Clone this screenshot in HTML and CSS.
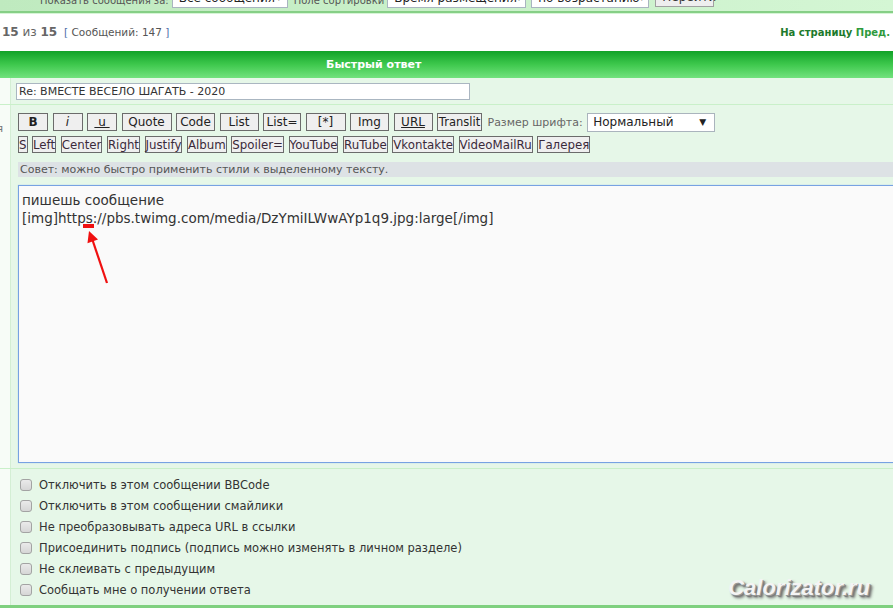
FILE: index.html
```html
<!DOCTYPE html>
<html lang="ru">
<head>
    <meta charset="UTF-8">
    <title>Быстрый ответ</title>
    <link rel="stylesheet" href="styles.css">
</head>
<body>
    <!-- Filter bar (scrolled partly out of view) -->
    <div class="filter-bar">
        <span class="filter-label">Показать сообщения за:</span>
        <span class="fake-select sel-period">Все сообщения<i>&#9662;</i></span>
        <span class="filter-label">Поле сортировки</span>
        <span class="fake-select sel-field">Время размещения<i>&#9662;</i></span>
        <span class="fake-select sel-order">по возрастанию<i>&#9662;</i></span>
        <span class="go-btn">Перейти</span>
    </div>

    <div class="pagination">
        <div class="page-count"><b>15</b> из <b>15</b> <span class="post-count"><em>[</em> Сообщений: 147 <em>]</em></span></div>
        <div class="page-links">На страницу <span class="prev">Пред.</span></div>
    </div>

    <div class="panel">
        <div class="panel-head">Быстрый ответ</div>

        <div class="row">
            <div class="side"></div>
            <div class="cell subject-cell">
                <div class="subject">Re: ВМЕСТЕ ВЕСЕЛО ШАГАТЬ - 2020</div>
            </div>
        </div>

        <div class="row">
            <div class="side"><span>Сообщения</span></div>
            <div class="cell message-cell">
                <div class="toolbar">
                    <span class="btn w30"><b>B</b></span>
                    <span class="btn w30"><i>i</i></span>
                    <span class="btn w30"><u>&nbsp;u&nbsp;</u></span>
                    <span class="btn w50">Quote</span>
                    <span class="btn w39">Code</span>
                    <span class="btn w39">List</span>
                    <span class="btn w38">List=</span>
                    <span class="btn w40">[*]</span>
                    <span class="btn w39">Img</span>
                    <span class="btn w39"><u>URL</u></span>
                    <span class="btn w44">Translit</span>
                    <span class="size-label">Размер шрифта:</span>
                    <span class="size-select">Нормальный<i>&#9660;</i></span>
                </div>
                <div class="toolbar toolbar-tags">
                    <span class="btn">S</span>
                    <span class="btn">Left</span>
                    <span class="btn">Center</span>
                    <span class="btn">Right</span>
                    <span class="btn">Justify</span>
                    <span class="btn">Album</span>
                    <span class="btn">Spoiler=</span>
                    <span class="btn">YouTube</span>
                    <span class="btn">RuTube</span>
                    <span class="btn">Vkontakte</span>
                    <span class="btn">VideoMailRu</span>
                    <span class="btn">Галерея</span>
                </div>
                <div class="tip">Совет: можно быстро применить стили к выделенному тексту.</div>
                <div class="editor">
                    <div>пишешь сообщение</div>
                    <div>[img]https://pbs.twimg.com/media/DzYmiILWwAYp1q9.jpg:large[/img]</div>

                    <!-- red annotation over the text -->
                    <svg class="annotation" width="40" height="70" viewBox="0 0 40 70">
                        <rect x="2" y="1" width="11" height="4" fill="#f01010"/>
                        <line x1="26" y1="60" x2="11.5" y2="17" stroke="#f01010" stroke-width="2.2"/>
                        <polygon points="8,8 17,16.6 6.5,20.2" fill="#f01010"/>
                    </svg>
                </div>
            </div>
        </div>

        <div class="row row-last">
            <div class="side"></div>
            <div class="cell options">
                <label><input type="checkbox"> Отключить в этом сообщении BBCode</label>
                <label><input type="checkbox"> Отключить в этом сообщении смайлики</label>
                <label><input type="checkbox"> Не преобразовывать адреса URL в ссылки</label>
                <label><input type="checkbox"> Присоединить подпись (подпись можно изменять в личном разделе)</label>
                <label><input type="checkbox"> Не склеивать с предыдущим</label>
                <label><input type="checkbox"> Сообщать мне о получении ответа</label>
                <div class="watermark">Calorizator.ru</div>
            </div>
        </div>
    </div>
</body>
</html>
```

FILE: styles.css
```css
body {
    margin: 0;
    font-family: "DejaVu Sans", Verdana, sans-serif;
    font-size: 11px;
    color: #333;
    background: #fff;
    overflow: hidden;
}

/* filter bar */
.filter-bar {
    margin-top: -12px;
    height: 23px;
    padding: 0 0 0 40px;
    display: flex;
    align-items: flex-end;
    white-space: nowrap;
    background: linear-gradient(to right, #bfeabf, #d4f6d4);
    border-bottom: 2px solid #86cf86;
    box-shadow: 0 1px 0 #d6f5d6;
}
.filter-bar > span {
    flex-shrink: 0;
}
.filter-label {
    color: #555;
    margin-bottom: 5px;
    font-size: 10px;
}
.fake-select {
    display: flex;
    justify-content: space-between;
    box-sizing: border-box;
    height: 20px;
    margin-bottom: 3px;
    padding: 2px 6px 0 6px;
    background: #fff;
    border: 1px solid #a9b5c0;
    font-size: 12px;
    color: #222;
    overflow: hidden;
}
.fake-select i {
    font-style: normal;
    font-size: 8px;
    color: #666;
    padding-top: 3px;
}
.sel-period { width: 116px; margin: 0 6px 3px 3px; }
.sel-field { width: 139px; margin: 0 5px 3px 3px; }
.sel-order { width: 118px; margin-right: 6px; }
.go-btn {
    box-sizing: border-box;
    width: 59px;
    height: 20px;
    margin-bottom: 4px;
    padding: 2px 6px 0;
    border: 1px solid #a0a0a0;
    background: #eee;
    font-size: 12px;
}

/* pagination */
.pagination {
    height: 38px;
    display: flex;
    justify-content: space-between;
    align-items: center;
    padding: 0 3px 0 2px;
}
.page-count {
    font-size: 12px;
    color: #666;
}
.page-count b {
    color: #666;
}
.post-count {
    margin-left: 3px;
    font-size: 10.5px;
    color: #555;
}
.post-count em {
    font-style: normal;
    color: #4f6fa8;
}
.page-links {
    font-weight: bold;
    font-size: 10px;
    color: #1c7a2c;
}
.page-links .prev {
    color: #2e9a3c;
}

/* quick reply panel */
.panel-head {
    height: 27px;
    line-height: 27px;
    padding-left: 326px;
    color: #fff;
    font-weight: bold;
    font-size: 11px;
    background: linear-gradient(#10a228, #3ec84d 50%, #72e27e);
}
.row {
    display: flex;
    border-bottom: 1px solid #c9f0c9;
}
.row-last {
    border-bottom: 3px solid #7fd07f;
}
.side {
    width: 10px;
    flex-shrink: 0;
    background: #f7fcf7;
    border-right: 1px solid #d4eed4;
    display: flex;
    justify-content: flex-end;
    overflow: hidden;
    white-space: nowrap;
    color: #777;
    font-size: 11px;
}
.side span {
    padding-top: 17px;
    margin-right: 7px;
}
.cell {
    flex: 1;
    background: #e6f7e8;
    min-width: 0;
}
.subject-cell {
    height: 26px;
    padding: 5px 0 0 5px;
    box-sizing: border-box;
}
.subject {
    box-sizing: border-box;
    width: 454px;
    height: 17px;
    padding: 1px 2px;
    background: #fff;
    border: 1px solid #aab6c1;
    color: #333;
}

/* message area */
.message-cell {
    padding: 8px 0 5px 7px;
}
.toolbar {
    display: flex;
    align-items: center;
    gap: 4.5px;
    height: 18px;
}
.toolbar-tags {
    margin-top: 5px;
    height: 17px;
    gap: 4.5px;
}
.btn {
    box-sizing: border-box;
    height: 18px;
    padding: 0 1px;
    display: flex;
    align-items: center;
    justify-content: center;
    border: 1px solid #6b6b6b;
    background: #efefef;
    color: #222;
    font-size: 12px;
}
.toolbar-tags .btn {
    height: 17px;
    padding: 0;
    font-size: 11.8px;
    color: #3a2a3a;
}
.btn b {
    font-size: 12px;
}
.w30 { width: 30px; }
.w38 { width: 38px; }
.w39 { width: 39px; }
.w40 { width: 40px; }
.w44 { width: 45px; font-size: 11.5px; }
.w50 { width: 50px; }
.size-label {
    margin-left: 1px;
    color: #666;
    font-size: 11px;
}
.size-select {
    box-sizing: border-box;
    width: 128px;
    height: 19px;
    display: flex;
    justify-content: space-between;
    align-items: center;
    padding: 0 8px 0 5px;
    background: #fff;
    border: 1px solid #aab4bd;
    color: #222;
    font-size: 12px;
}
.size-select i {
    font-style: normal;
    font-size: 9px;
}
.tip {
    margin-top: 9px;
    height: 15px;
    line-height: 15px;
    padding-left: 2px;
    background: #dde2e5;
    color: #555;
    font-size: 11px;
}
.editor {
    position: relative;
    margin-top: 8px;
    height: 278px;
    box-sizing: border-box;
    padding: 5px 3px;
    background: #fafafa;
    border: 1px solid #77a2e2;
    border-right: none;
    box-shadow: 0 0 1px #9fc0ee;
    color: #333;
    font-size: 13.5px;
    line-height: 18px;
}
.annotation {
    position: absolute;
    left: 62px;
    top: 37px;
}

/* options */
.options {
    position: relative;
    height: 136px;
    padding: 5px 0 0 9px;
    box-sizing: border-box;
    font-size: 11.5px;
    color: #333;
}
.options label {
    display: flex;
    align-items: center;
    height: 21px;
}
.options input {
    appearance: none;
    width: 12px;
    height: 12px;
    margin: 0 7px 0 0;
    border: 1px solid #a3a3a3;
    border-radius: 3px;
    background: linear-gradient(#eaeaea, #d6d6d6);
}
.watermark {
    position: absolute;
    right: 23px;
    bottom: 4px;
    font-family: "Liberation Sans", Arial, sans-serif;
    font-weight: bold;
    font-style: italic;
    font-size: 22px;
    color: #f4f4f4;
    text-shadow: 1px 1px 0 #999, 2px 2px 1px #777, 3px 3px 3px #666;
}
```
